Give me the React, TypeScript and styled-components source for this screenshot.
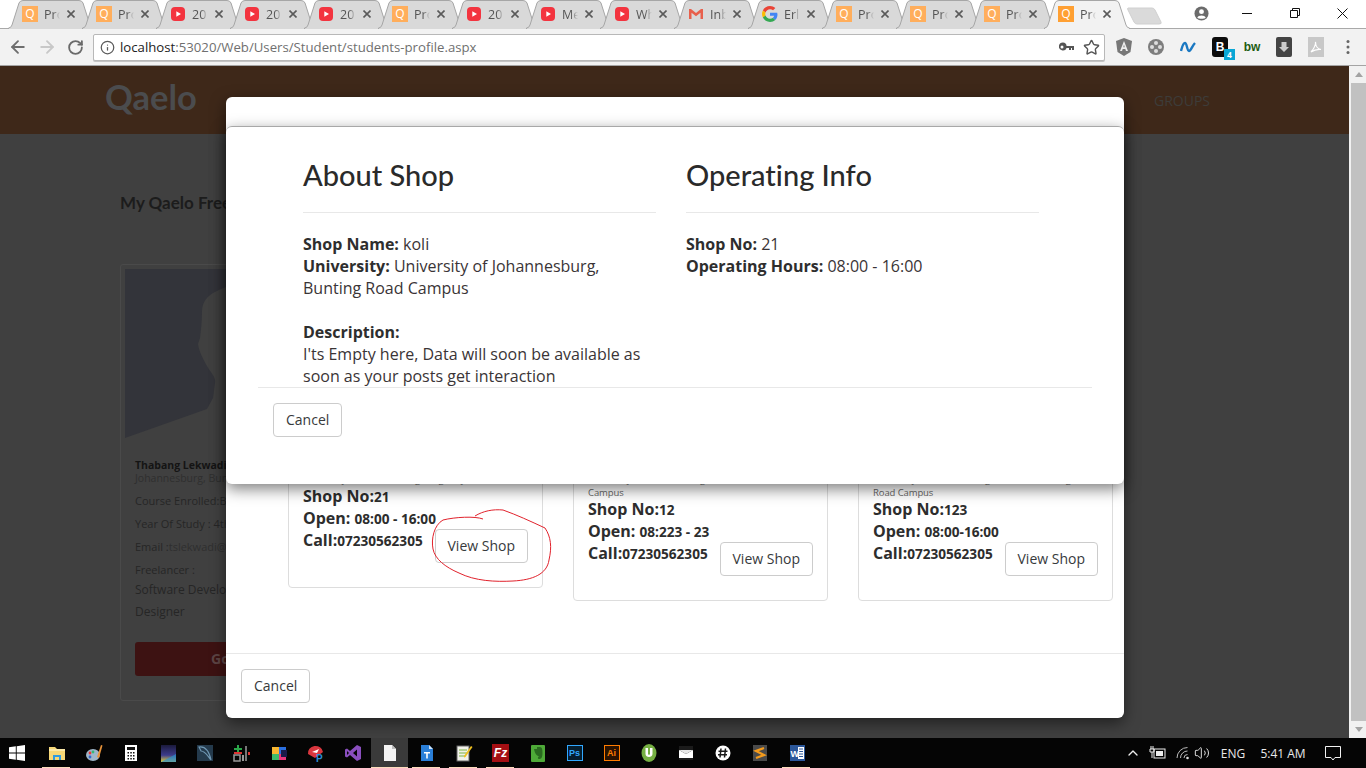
import React from "react";
import styled, { createGlobalStyle } from "styled-components";
import { ArrowLeft, ArrowRight, RotateCw, Info, Star, ChevronUp, Volume2 } from "lucide-react";

const Global = createGlobalStyle`
  html, body { margin: 0; padding: 0; height: 100%; overflow: hidden; }
  body { font-family: "Open Sans", "Liberation Sans", sans-serif; background: #fff; }
  * { box-sizing: border-box; }
`;

const Root = styled.div`
  width: 1366px; height: 768px; display: flex; flex-direction: column; overflow: hidden;
`;

/* ---------- tab strip ---------- */
const Strip = styled.div`
  height: 28px; display: flex; align-items: flex-start; padding-left: 8px; background: #fff; position: relative; z-index: 2;
`;
const TabBox = styled.div<{ $active?: boolean }>`
  position: relative; width: 86px; height: ${p => (p.$active ? 29 : 28)}px; margin-right: -12px; flex: none;
  display: flex; align-items: center; padding: 0 0 ${p => (p.$active ? 1 : 0)}px 14px;
  z-index: ${p => (p.$active ? 2 : 1)};
`;
const TabShape = styled.svg`
  position: absolute; left: 0; top: 0; width: 86px; height: 29px;
`;
const TabIcon = styled.span`
  position: relative; width: 16px; height: 16px; flex: none; display: flex;
`;
const QIcon = styled.span<{ $active?: boolean }>`
  width: 16px; height: 16px; background: ${p => (p.$active ? "#ffa033" : "#ffae5c")}; color: #fff; font: 12px/15px "Open Sans", sans-serif; text-align: center;
`;
const TabLabel = styled.span`
  position: relative; margin-left: 6px; width: 16px; overflow: hidden; white-space: nowrap; font-size: 12.5px; color: #555;
  -webkit-mask-image: linear-gradient(90deg, #000 55%, transparent);
  mask-image: linear-gradient(90deg, #000 55%, transparent);
`;
const TabClose = styled.svg`
  position: relative; margin-left: 7px; width: 8px; height: 8px; flex: none;
`;
const NewTab = styled.svg`
  margin: 7px 0 0 9px; width: 36px; height: 18px; flex: none; position: relative; z-index: 0;
`;
const WinControls = styled.div`
  margin-left: auto; display: flex; align-items: center; height: 26px; flex: none;
`;
const WinBtn = styled.div`
  width: 48px; height: 26px; display: flex; align-items: center; justify-content: center;
  &:last-child { width: 47px; }
`;
const Profile = styled.div`
  width: 22px; height: 26px; margin-right: 11px; display: flex; align-items: center; justify-content: center;
`;

/* ---------- toolbar ---------- */
const Toolbar = styled.div`
  height: 38px; background: #f2f2f2; border-top: 1px solid #a9a9a9; border-bottom: 1px solid #a4a4a4;
  display: flex; align-items: center; padding-left: 3px; flex: none;
`;
const NavBtn = styled.div`
  width: 29px; display: flex; justify-content: center; flex: none;
`;
const Omni = styled.div`
  margin-left: 3px; width: 1012px; height: 27px; background: #fff; border: 1px solid #b8b8b8; border-radius: 2px;
  display: flex; align-items: center; padding: 0 0 0 6px; flex: none; box-shadow: 0 1px 0 #c4c4c4;
`;
const Url = styled.div`
  margin-left: 5px; font-size: 13.2px; color: #6f6f6f; flex: 1; white-space: nowrap;
  b { font-weight: 400; color: #222; }
`;
const OmniIcon = styled.span`
  width: 25px; display: flex; justify-content: center; flex: none;
`;
const ExtRow = styled.div`
  margin-left: 3px; display: flex;
`;
const Ext = styled.div`
  width: 32px; height: 24px; display: flex; align-items: center; justify-content: center; position: relative;
`;
const ExtBadge = styled.span`
  position: absolute; right: 1px; bottom: -1px; width: 11px; height: 11px; background: #0aa7d6; color: #fff;
  font: bold 8.5px/11px "Open Sans", sans-serif; text-align: center;
`;

/* ---------- page ---------- */
const PageArea = styled.div`
  flex: 1; min-height: 0; display: flex; position: relative;
`;
const Page = styled.div`
  flex: 1; background: #404040; position: relative; overflow: hidden;
`;
const Nav = styled.div`
  height: 68px; background: #3e2819; display: flex; align-items: center; padding: 0 139px 0 105px;
`;
const Logo = styled.div`
  font: 700 34.5px/1 "Lato", sans-serif; color: #4b4c4e; margin-top: -6px;
`;
const NavLink = styled.div`
  margin-left: auto; font-size: 14px; color: #3d3c39; margin-top: 1px;
`;
const Content = styled.div`
  padding: 58px 0 0 120px;
`;
const PageTitle = styled.div`
  font: 700 17px/22px "Lato", sans-serif; color: #1c1c1c; white-space: nowrap;
`;
const ProfileCard = styled.div`
  margin-top: 50px; width: 400px; height: 437px; border: 1px solid #4a4a4a; border-radius: 3px; padding: 4px;
`;
const Photo = styled.svg`
  display: block; width: 200px; height: 169px;
`;
const ProfileText = styled.div`
  padding: 21px 0 0 10px; font-size: 10.5px; color: #262626; line-height: 13px; white-space: nowrap;
`;
const ProfileName = styled.div`
  font-weight: 700; color: #141414;
`;
const ProfileRow = styled.div<{ $gap?: number; $big?: boolean }>`
  margin-top: ${p => p.$gap ?? 10}px; font-size: ${p => (p.$big ? 12 : 11)}px;
`;
const Muted = styled.span`
  color: #2f2f2f;
`;
const GoBtn = styled.div`
  margin: 24px 0 0 10px; width: 300px; height: 34px; background: #3d1212; border-radius: 3px; color: #5c4444;
  font-size: 14px; font-weight: 700; line-height: 34px; padding-left: 76px;
`;

/* ---------- scrollbar ---------- */
const ScrollBar = styled.div`
  width: 17px; background: #f1f1f1; display: flex; flex-direction: column; align-items: flex-end; flex: none;
`;
const ScrollArrow = styled.div<{ $down?: boolean }>`
  width: 15px; height: 17px; display: flex; align-items: center; justify-content: center;
  &::before { content: ""; border: 4px solid transparent; ${p => (p.$down ? "border-top: 5px solid #a3a3a3; margin-top: 4px;" : "border-bottom: 5px solid #a3a3a3; margin-bottom: 4px;")} }
`;
const ScrollThumb = styled.div`
  width: 15px; flex: 1; background: #c1c1c1;
`;

/* ---------- modals ---------- */
const OuterModal = styled.div`
  position: absolute; left: 226px; top: 31px; width: 898px; height: 621px; background: #fff; border-radius: 6px;
  box-shadow: 0 5px 15px rgba(0,0,0,.5); display: flex; flex-direction: column;
`;
const OuterBody = styled.div`
  flex: 1; display: flex; gap: 30px; align-items: flex-start; padding: 303px 0 0 62px; min-height: 0;
`;
const ModalFooter = styled.div`
  height: 65px; border-top: 1px solid #e8e8e8; padding: 15px; flex: none;
`;
const Button = styled.div`
  display: inline-block; height: 34px; padding: 0 12px; border: 1px solid #ccc; border-radius: 4px; background: #fff;
  font-size: 14px; line-height: 32px; color: #373a3c; white-space: nowrap; flex: none;
`;
const ShopCard = styled.div`
  width: 255px; border: 1px solid #ddd; border-radius: 4px; padding: 72px 14px 24px;
`;
const ShopSmall = styled.div`
  font-size: 9.5px; line-height: 13px; color: #666; white-space: nowrap; letter-spacing: -0.1px;
`;
const ShopRow = styled.div`
  display: flex; justify-content: space-between; align-items: flex-start;
`;
const ShopInfo = styled.div`
  flex: 1; min-width: 0; margin-top: -1px; white-space: nowrap; font-size: 16px; line-height: 22px; font-weight: 700; color: #2d2d2d;
  small { font-size: 13.6px; font-weight: 700; line-height: 1; }
`;
const ShopBtn = styled(Button)`
  margin-top: 43px;
`;
const InnerModal = styled.div`
  position: absolute; left: 226px; top: 60px; width: 898px; height: 358px; background: #fff; border-radius: 6px;
  border-top: 1px solid #a8a8a8; box-shadow: 0 5px 15px rgba(0,0,0,.5); display: flex; flex-direction: column;
`;
const InnerBody = styled.div`
  height: 260px; padding: 25px 0 0 77px; display: flex; gap: 30px; overflow: hidden; flex: none;
`;
const Col = styled.div`
  width: 353px; flex: none; font-size: 16px; line-height: 22px; color: #3a3436;
  b { color: #2e2e2e; }
`;
const ColHead = styled.h2`
  margin: 0; font: 500 29px/46px "Lato", sans-serif; font-variant-ligatures: none; color: #2a2a2a; height: 61px; border-bottom: 1px solid #e8e8e8;
`;
const ColText = styled.div`
  margin-top: 20px;
`;
const Gap = styled.div`
  height: 22px;
`;
const InnerFooter = styled.div`
  margin: 0 32px; border-top: 1px solid #e8e8e8; padding: 15px;
`;
const Scribble = styled.svg`
  position: absolute; left: 425px; top: 435px; width: 135px; height: 85px; overflow: visible;
`;

/* ---------- taskbar ---------- */
const Taskbar = styled.div`
  height: 30px; background: #050505; display: flex; align-items: center; flex: none;
`;
const StartBtn = styled.div`
  width: 38px; height: 30px; display: flex; align-items: center; justify-content: center; flex: none; padding-right: 4px;
`;
const TaskCell = styled.div<{ $active?: boolean; $open?: boolean }>`
  width: 37px; height: 30px; flex: none; display: flex; align-items: center; justify-content: center; position: relative;
  background: ${p => (p.$active ? "#3a3a3a" : "transparent")};
  ${p => p.$open && `&::after { content: ""; position: absolute; bottom: 0; height: 1px; left: ${p.$active ? 0 : 4}px; right: ${p.$active ? 0 : 5}px; background: #fcdcbc; }`}
`;
const Tray = styled.div`
  margin-left: auto; display: flex; align-items: center; height: 30px; color: #e8e8e8; font-size: 12px; padding-right: 13px;
`;
const TrayItem = styled.div<{ $w: number }>`
  width: ${p => p.$w}px; display: flex; justify-content: center; white-space: nowrap;
`;
const TinyTile = styled.span<{ $c: string; $bg?: string; $bd?: string }>`
  width: 16px; height: 16px; display: flex; align-items: center; justify-content: center;
  font: 700 9px/1 "Liberation Sans", sans-serif; color: ${p => p.$c}; background: ${p => p.$bg ?? "transparent"};
  border: ${p => (p.$bd ? `1px solid ${p.$bd}` : "none")};
`;

/* ---------- icon drawings ---------- */
const YouTubeIcon = () => (
  <svg width="16" height="16" viewBox="0 0 16 16"><rect x="1" y="1" width="14" height="14" rx="4" fill="#f3343f" /><path d="M6.3 5.2 L11 8 L6.3 10.8Z" fill="#fff" /></svg>
);
const GmailIcon = () => (
  <svg width="16" height="16" viewBox="0 0 16 16"><path d="M1 3 H3 L8 7 L13 3 H15 V13 H12.5 V6.8 L8 10.2 L3.5 6.8 V13 H1Z" fill="#e8604c" /></svg>
);
const GoogleIcon = () => (
  <svg width="16" height="16" viewBox="0 0 48 48">
    <path fill="#EA4335" d="M24 9.5c3.5 0 6.7 1.2 9.2 3.6l6.9-6.9C35.9 2.4 30.5 0 24 0 14.6 0 6.5 5.4 2.6 13.2l8 6.2C12.5 13.7 17.8 9.5 24 9.5z" />
    <path fill="#4285F4" d="M46.1 24.5c0-1.6-.1-3.1-.4-4.5H24v9h12.4c-.5 2.9-2.2 5.3-4.6 6.9l7.7 6c4.5-4.2 7-10.3 7-17.4z" />
    <path fill="#FBBC05" d="M10.6 28.6c-.5-1.4-.8-3-.8-4.6s.3-3.2.8-4.6l-8-6.2C.9 16.5 0 20.1 0 24s.9 7.5 2.6 10.8l8-6.2z" />
    <path fill="#34A853" d="M24 48c6.5 0 11.9-2.1 15.9-5.8l-7.7-6c-2.1 1.4-4.9 2.3-8.2 2.3-6.2 0-11.5-4.2-13.4-9.9l-8 6.2C6.5 42.6 14.6 48 24 48z" />
  </svg>
);

type TabT = { kind: "q" | "yt" | "gm" | "g"; label: string; active?: boolean };
const tabs: TabT[] = [
  { kind: "q", label: "Pro" }, { kind: "q", label: "Pro" }, { kind: "yt", label: "20" }, { kind: "yt", label: "20" },
  { kind: "yt", label: "20" }, { kind: "q", label: "Pro" }, { kind: "yt", label: "20" }, { kind: "yt", label: "Me" },
  { kind: "yt", label: "Wh" }, { kind: "gm", label: "Inb" }, { kind: "g", label: "Erl" }, { kind: "q", label: "Pro" },
  { kind: "q", label: "Pro" }, { kind: "q", label: "Pro" }, { kind: "q", label: "Pro", active: true },
];

const Tab = ({ t }: { t: TabT }) => (
  <TabBox $active={t.active}>
    <TabShape viewBox="0 0 86 29">
      <path d="M0.5 29 L0.5 28 Q3 28 4 25 L11 3 Q12 0.5 15 0.5 H71 Q74 0.5 75 3 L82 25 Q83 28 85.5 28 V29" fill={t.active ? "#f2f2f2" : "#d9d9d9"} stroke="#a6a6a6" />
    </TabShape>
    <TabIcon>
      {t.kind === "q" && <QIcon $active={t.active}>Q</QIcon>}
      {t.kind === "yt" && <YouTubeIcon />}
      {t.kind === "gm" && <GmailIcon />}
      {t.kind === "g" && <GoogleIcon />}
    </TabIcon>
    <TabLabel>{t.label}</TabLabel>
    <TabClose viewBox="0 0 8 8"><path d="M0.5 0.5 L7.5 7.5 M7.5 0.5 L0.5 7.5" stroke="#5a5a5a" strokeWidth="1.6" /></TabClose>
  </TabBox>
);

const shopLines: { small: string[]; no: string; open: string }[] = [
  { small: ["University of Johannesburg, Kingsway Auckland"], no: "21", open: "08:00 - 16:00" },
  { small: ["University of Johannesburg, Auckland Park", "Campus"], no: "12", open: "08:223 - 23" },
  { small: ["University of Johannesburg, Auckland Bunting", "Road Campus"], no: "123", open: "08:00-16:00" },
];

const S = ({ children }: { children: React.ReactNode }) => <svg width="20" height="20" viewBox="0 0 20 20">{children}</svg>;
const taskIcons: { el: React.ReactNode; open?: boolean; active?: boolean }[] = [
  { open: true, el: <S><path d="M2 4 H8 L10 6 H18 V17 H2Z" fill="#f6d776" /><path d="M2 6 H18 V8 H2Z" fill="#fbe9a8" /><path d="M6 17 V12 H14 V17 H12 V14 H8 V17Z" fill="#2f9be0" /></S> },
  { el: <S><ellipse cx="9" cy="12" rx="7" ry="6" fill="#9fb6c9" /><circle cx="6" cy="10" r="1.4" fill="#e33" /><circle cx="9" cy="9" r="1.4" fill="#3b7" /><circle cx="6" cy="14" r="1.4" fill="#36c" /><path d="M13 14 L17 2 L18.5 2.5 L15 15Z" fill="#e8933a" /></S> },
  { el: <S><rect x="4" y="2" width="12" height="16" fill="#fff" /><rect x="6" y="4" width="8" height="3" fill="#111" /><path d="M6.5 9 h1.5 v1.5 h-1.5z M9.3 9 h1.5 v1.5 h-1.5z M12 9 h1.5 v1.5 h-1.5z M6.5 12 h1.5 v1.5 h-1.5z M9.3 12 h1.5 v1.5 h-1.5z M12 12 h1.5 v1.5 h-1.5z M6.5 15 h1.5 v1.5 h-1.5z M9.3 15 h1.5 v1.5 h-1.5z M12 15 h1.5 v1.5 h-1.5z" fill="#111" /></S> },
  { el: <S><defs><linearGradient id="mt" x1="0" y1="0" x2="0" y2="1"><stop offset="0" stopColor="#1b1a3c" /><stop offset=".6" stopColor="#3c3c8c" /><stop offset="1" stopColor="#e0d23a" /></linearGradient></defs><rect x="3" y="2" width="15" height="17" fill="url(#mt)" /><path d="M3 19 L18 11 V19Z" fill="#2a8fd0" opacity=".7" /></S> },
  { el: <S><rect x="2" y="2" width="16" height="16" fill="#243a4c" /><path d="M4 4 C10 3 14 8 16 17 C12 12 10 8 6 8 Z" fill="none" stroke="#6f97b3" strokeWidth="1.2" /></S> },
  { el: <S><path d="M5 2 h2 v3 h3 v2 h-3 v3 h-2 v-3 h-3 v-2 h3z" fill="#2ba84a" /><rect x="2" y="9" width="8" height="2" fill="#d33" /><rect x="2" y="12" width="6" height="6" fill="none" stroke="#999" strokeWidth="1.5" /><rect x="10" y="12" width="2" height="6" fill="#999" /><path d="M13 3 h2 v15 h-2z" fill="#777" /><path d="M16 9 h2 v3 h-2z" fill="#d33" /></S> },
  { el: <S><rect x="3" y="4" width="14" height="13" fill="#e9357c" /><rect x="3" y="4" width="7" height="7" fill="#f7b731" /><rect x="10" y="4" width="7" height="7" fill="#2b6fe0" /><rect x="3" y="11" width="7" height="6" fill="#3ebc6b" /><rect x="12" y="7" width="6" height="7" fill="#1a1a4a" /></S> },
  { el: <S><path d="M2 11 A7.5 7 0 0 1 17 9 L9 15 Z" fill="#d9363e" /><path d="M6 9 L13 6 L11 10Z" fill="#fff" /><text x="10" y="19" fontSize="10" fontWeight="700" fill="#2b8fd6" fontFamily="Liberation Sans">P</text></S> },
  { el: <S><path d="M14 2 L18 4 V16 L14 18 L7 12 L4 14.5 L2 13.5 V6.5 L4 5.5 L7 8Z M14 6.5 L10 10 L14 13.5Z M4 8 V12 L6 10Z" fill="#8a4fbf" fillRule="evenodd" /></S> },
  { open: true, active: true, el: <S><path d="M4 2 H12 L16 6 V18 H4Z" fill="#f4f4f4" /><path d="M12 2 V6 H16" fill="#bdbdbd" /></S> },
  { open: true, el: <S><path d="M4 2 H12 L16 6 V18 H4Z" fill="#2a7fd8" /><path d="M12 2 V6 H16Z" fill="#cfe3f7" /><path d="M7 9 h6 v1.5 h-2.2 v5 h-1.6 v-5 H7z" fill="#fff" /></S> },
  { open: true, el: <S><rect x="3" y="3" width="12" height="15" fill="#f2f2ea" stroke="#666" /><path d="M5 7 h8 M5 10 h8 M5 13 h6" stroke="#7cb342" strokeWidth="1" /><path d="M10 13 L17 3 L18.5 4 L11.5 14 L10 14.5Z" fill="#f0c020" /></S> },
  { open: true, el: <TinyTile $c="#fff" $bg="#a50f13" style={{ fontSize: 12, width: 17, height: 18, fontStyle: "italic" }}>Fz</TinyTile> },
  { el: <S><rect x="3" y="2" width="14" height="17" rx="1" fill="#4eaa38" /><path d="M6 6 H9 V4 H12 C14 4 14.5 6 14.5 10 C14.5 15 13 16 11 16 C9.5 16 9.5 13.5 11.5 13.5 C9 13 7 11 6 6Z" fill="#2a6b20" /></S> },
  { el: <TinyTile $c="#31a8ff" $bg="#061e2e" $bd="#31a8ff">Ps</TinyTile> },
  { el: <TinyTile $c="#ff7c00" $bg="#2a1200" $bd="#ff7c00">Ai</TinyTile> },
  { el: <S><ellipse cx="10" cy="10" rx="7.5" ry="9" fill="#76b043" /><path d="M6.5 5 V11 C6.5 15 13.5 15 13.5 11 V5 H11 V11 C11 12 9 12 9 11 V5Z" fill="#fff" /></S> },
  { el: <S><rect x="3" y="3" width="14" height="14" fill="#1b1b1b" /><path d="M3 7 L10 11 L17 7 V15 H3Z" fill="#fff" /><path d="M3 7 H17 L10 11Z" fill="#e8e8e8" /></S> },
  { el: <S><circle cx="10" cy="10" r="7.5" fill="#fff" /><path d="M8 5.5 L7 14.5 M12.5 5.5 L11.5 14.5 M5.5 8.3 H14.5 M5 11.7 H14" stroke="#1a1a1a" strokeWidth="1.5" /></S> },
  { el: <S><rect x="3" y="2" width="14" height="16" fill="#4a4a4a" /><path d="M14 5 L6 8 L14 12 L6 15" fill="none" stroke="#f49b1c" strokeWidth="2.3" /></S> },
  { open: true, el: <S><rect x="3" y="2" width="15" height="16" fill="#2b579a" /><rect x="11" y="4" width="6" height="12" fill="#fff" /><path d="M12 6 h4 M12 8.5 h4 M12 11 h4 M12 13.5 h4" stroke="#2b579a" /><text x="3.5" y="13.5" fontSize="9" fontWeight="700" fill="#fff" fontFamily="Liberation Sans">W</text></S> },
];

export default function App() {
  return (
    <Root>
      <Global />
      <Strip>
        {tabs.map((t, i) => <Tab key={i} t={t} />)}
        <NewTab viewBox="0 0 36 18"><path d="M1 1 H25 Q27 1 28 3 L34 15 Q35 17 32 17 H10 Q8 17 7 15 L1 3 Q0 1 1 1Z" fill="#dadada" stroke="#d0d0d0" /></NewTab>
        <WinControls>
          <Profile>
            <svg width="15" height="15" viewBox="0 0 16 16"><circle cx="8" cy="8" r="7.5" fill="#6b6b6b" /><circle cx="8" cy="6" r="2.6" fill="#fff" /><path d="M3.5 12.5 C4.5 9.5 11.5 9.5 12.5 12.5 C11 14 5 14 3.5 12.5Z" fill="#fff" /></svg>
          </Profile>
          <WinBtn><svg width="10" height="10" viewBox="0 0 10 10"><path d="M0 5.5 H10" stroke="#111" /></svg></WinBtn>
          <WinBtn><svg width="10" height="10" viewBox="0 0 10 10"><path d="M2.5 2.5 V0.5 H9.5 V7.5 H7.5 M0.5 2.5 H7.5 V9.5 H0.5Z" fill="none" stroke="#111" /></svg></WinBtn>
          <WinBtn><svg width="11" height="11" viewBox="0 0 11 11"><path d="M0.5 0.5 L10.5 10.5 M10.5 0.5 L0.5 10.5" stroke="#111" /></svg></WinBtn>
        </WinControls>
      </Strip>

      <Toolbar>
        <NavBtn><ArrowLeft size={20} color="#6e6e6e" strokeWidth={2.2} /></NavBtn>
        <NavBtn><ArrowRight size={20} color="#c8c8c8" strokeWidth={2.2} /></NavBtn>
        <NavBtn><RotateCw size={17} color="#6a6a6a" strokeWidth={2.6} /></NavBtn>
        <Omni>
          <Info size={15} color="#5a5a5a" strokeWidth={2} />
          <Url><b>localhost</b>:53020/Web/Users/Student/students-profile.aspx</Url>
          <OmniIcon>
            <svg width="15" height="10" viewBox="0 0 15 10"><path d="M4 0.5 A4 4 0 1 0 7.6 6 H10 V8 H12 V6 H13 V8 H15 V4 H7.6 A4 4 0 0 0 4 0.5Z M3 3.5 A1.5 1.5 0 1 1 3 6.5 A1.5 1.5 0 1 1 3 3.5Z" fill="#555" fillRule="evenodd" /></svg>
          </OmniIcon>
          <OmniIcon><Star size={17} color="#555" strokeWidth={2} /></OmniIcon>
        </Omni>
        <ExtRow>
          <Ext><svg width="16" height="18" viewBox="0 0 16 18"><path d="M8 0 L16 3 L14.5 14 L8 18 L1.5 14 L0 3Z" fill="#777" /><path d="M8 3 L12 13 H10 L9.3 11 H6.7 L6 13 H4Z M8 6.5 L7.3 9.3 H8.7Z" fill="#eee" fillRule="evenodd" /></svg></Ext>
          <Ext><svg width="18" height="18" viewBox="0 0 18 18"><circle cx="9" cy="9" r="8" fill="#7d7d7d" /><circle cx="9" cy="5" r="2" fill="#ddd" /><circle cx="5" cy="9" r="2" fill="#ddd" /><circle cx="13" cy="9" r="2" fill="#ddd" /><circle cx="9" cy="13" r="2" fill="#ddd" /></svg></Ext>
          <Ext><svg width="16" height="12" viewBox="0 0 16 12"><path d="M1 10 C2 6 3 2 5 2 C7 2 7 10 9 10 C11 10 12 5 15 2" fill="none" stroke="#1a78c2" strokeWidth="2.4" /></svg></Ext>
          <Ext>
            <TinyTile $c="#fff" $bg="#0c0c0c" style={{ borderRadius: 3, fontSize: 12, width: 16, height: 20 }}>B</TinyTile>
            <ExtBadge>4</ExtBadge>
          </Ext>
          <Ext><TinyTile $c="#1f5c12" style={{ fontSize: 12, width: 18 }}>bw</TinyTile></Ext>
          <Ext><svg width="16" height="20" viewBox="0 0 16 20"><rect width="16" height="20" rx="2" fill="#444" /><path d="M5.5 5 H10.5 V10 H13 L8 15 L3 10 H5.5Z" fill="#ccc" /></svg></Ext>
          <Ext><svg width="16" height="20" viewBox="0 0 16 20"><rect width="16" height="20" fill="#c8c8c8" /><path d="M3 15 C6 12 8 7 7.5 5 C7.5 9 10 12 13 12.5 C9 12 6 13 3 15Z" fill="none" stroke="#fff" strokeWidth="1.2" /></svg></Ext>
          <Ext><svg width="4" height="16" viewBox="0 0 4 16"><circle cx="2" cy="2.5" r="1.5" fill="#666" /><circle cx="2" cy="8" r="1.5" fill="#666" /><circle cx="2" cy="13.5" r="1.5" fill="#666" /></svg></Ext>
        </ExtRow>
      </Toolbar>

      <PageArea>
        <Page>
          <Nav>
            <Logo>Qaelo</Logo>
            <NavLink>GROUPS</NavLink>
          </Nav>
          <Content>
            <PageTitle>My Qaelo Freelance Shop</PageTitle>
            <ProfileCard>
              <Photo viewBox="0 0 200 169">
                <rect width="200" height="169" fill="#33343a" />
                <path d="M92 22 C82 26 77 34 77 42 C77 52 76 62 75 69 L73 75 C74 82 78 90 82 97 C86 104 91 108 90 114 L88 129 L82 140 L0 169 H200 V6 C150 6 110 12 92 22Z" fill="#404040" />
              </Photo>
              <ProfileText>
                <ProfileName>Thabang Lekwadi</ProfileName>
                <Muted>Johannesburg, Bunting Road</Muted>
                <ProfileRow $gap={9}>Course Enrolled:BSc IT</ProfileRow>
                <ProfileRow>Year Of Study : 4th</ProfileRow>
                <ProfileRow>Email :<Muted>tslekwadi@gmail.com</Muted></ProfileRow>
                <ProfileRow>Freelancer :</ProfileRow>
                <ProfileRow $gap={7} $big>Software Developer</ProfileRow>
                <ProfileRow $gap={9} $big>Designer</ProfileRow>
              </ProfileText>
              <GoBtn>Go</GoBtn>
            </ProfileCard>
          </Content>

          <OuterModal>
            <OuterBody>
              {shopLines.map((s, i) => (
                <ShopCard key={i}>
                  {s.small.map((l, j) => <ShopSmall key={j}>{l}</ShopSmall>)}
                  <ShopRow>
                    <ShopInfo>
                      <div>Shop No:<small>{s.no}</small></div>
                      <div>Open: <small>{s.open}</small></div>
                      <div>Call:<small>07230562305</small></div>
                    </ShopInfo>
                    <ShopBtn>View Shop</ShopBtn>
                  </ShopRow>
                </ShopCard>
              ))}
            </OuterBody>
            <ModalFooter><Button>Cancel</Button></ModalFooter>
          </OuterModal>

          <InnerModal>
            <InnerBody>
              <Col>
                <ColHead>About Shop</ColHead>
                <ColText>
                  <div><b>Shop Name:</b> koli</div>
                  <div><b>University:</b> University of Johannesburg, Bunting Road Campus</div>
                  <Gap />
                  <div><b>Description:</b></div>
                  <div>I'ts Empty here, Data will soon be available as soon as your posts get interaction</div>
                </ColText>
              </Col>
              <Col>
                <ColHead>Operating Info</ColHead>
                <ColText>
                  <div><b>Shop No:</b> 21</div>
                  <div><b>Operating Hours:</b> 08:00 - 16:00</div>
                </ColText>
              </Col>
            </InnerBody>
            <InnerFooter><Button>Cancel</Button></InnerFooter>
          </InnerModal>

          <Scribble viewBox="0 0 135 85">
            <path d="M58 18 C50 15 30 16 18 19 C9 24 6 38 8 48 C10 58 20 66 34 72 C50 80 70 81 88 80 C108 79 122 73 124 59 C127 46 126 36 120 27 C105 20 92 14 78 9 C68 8 58 10 50 15" fill="none" stroke="#e1222c" strokeWidth="1" />
          </Scribble>
        </Page>
        <ScrollBar>
          <ScrollArrow />
          <ScrollThumb />
          <ScrollArrow $down />
        </ScrollBar>
      </PageArea>

      <Taskbar>
        <StartBtn>
          <svg width="16" height="16" viewBox="0 0 16 16"><path d="M0 2.3 L6.8 1.3 V7.5 H0Z M7.7 1.2 L16 0 V7.5 H7.7Z M0 8.5 H6.8 V14.7 L0 13.7Z M7.7 8.5 H16 V16 L7.7 14.8Z" fill="#fff" /></svg>
        </StartBtn>
        {taskIcons.map((t, i) => <TaskCell key={i} $active={t.active} $open={t.open}>{t.el}</TaskCell>)}
        <Tray>
          <TrayItem $w={16}><ChevronUp size={16} color="#eee" /></TrayItem>
          <TrayItem $w={32}><svg width="17" height="14" viewBox="0 0 17 14"><rect x="5" y="3" width="11" height="9" fill="none" stroke="#eee" /><rect x="7" y="5" width="7" height="5" fill="#eee" /><path d="M2 0 V3 M4 0 V3 M1 3 H5 V6 H1Z M3 6 V12" stroke="#eee" fill="none" /></svg></TrayItem>
          <TrayItem $w={18}><svg width="15" height="14" viewBox="0 0 15 14"><circle cx="12.5" cy="12" r="1.3" fill="#ddd" /><path d="M9 12 A3.5 3.5 0 0 1 12.5 8.5 M5.5 12 A7 7 0 0 1 12.5 5 M2 12 A10.5 10.5 0 0 1 12.5 1.5" fill="none" stroke="#bbb" strokeWidth="1" /></svg></TrayItem>
          <TrayItem $w={22}><Volume2 size={16} color="#eee" strokeWidth={1.4} /></TrayItem>
          <TrayItem $w={40}>ENG</TrayItem>
          <TrayItem $w={60}>5:41 AM</TrayItem>
          <TrayItem $w={40}><svg width="16" height="16" viewBox="0 0 16 16"><path d="M0.5 1.5 H15.5 V12.5 H10 L8 15 L6 12.5 H0.5Z" fill="none" stroke="#f2f2f2" /></svg></TrayItem>
        </Tray>
      </Taskbar>
    </Root>
  );
}
